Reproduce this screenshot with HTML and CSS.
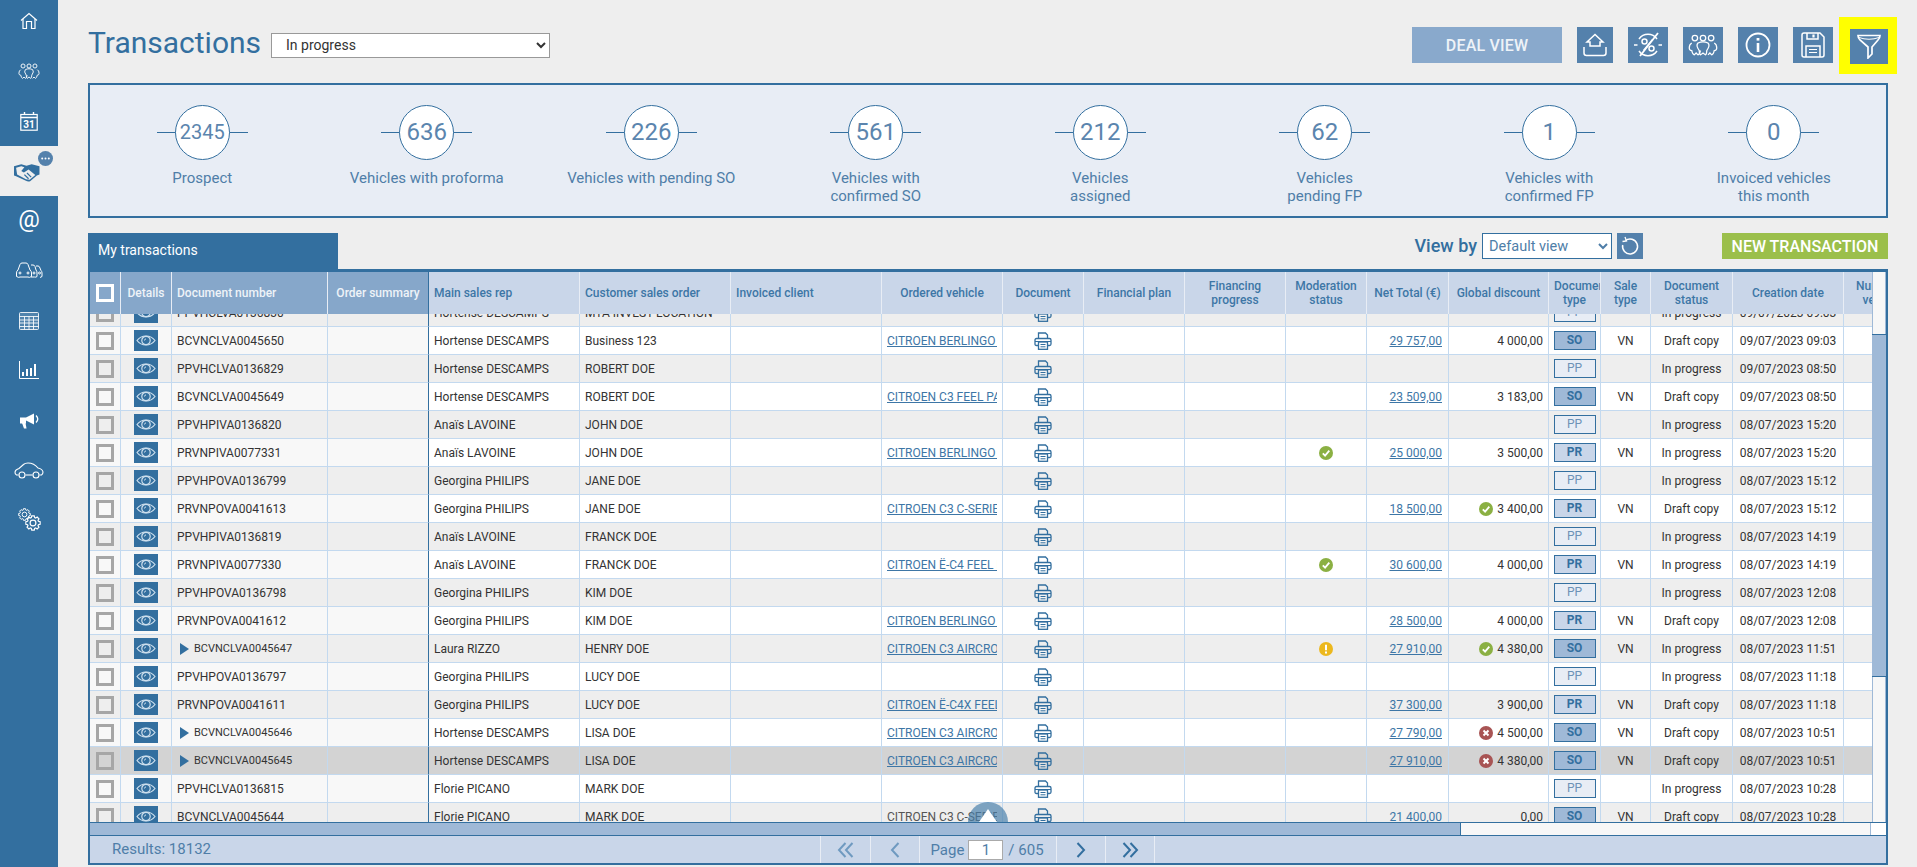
FILE: index.html
```html
<!DOCTYPE html>
<html lang="en">
<head>
<meta charset="utf-8">
<title>Transactions</title>
<link rel="stylesheet" href="styles.css">
</head>
<body>
<svg class="defs" width="0" height="0" aria-hidden="true">
  <symbol id="eye" viewBox="0 0 24 21"><path d="M3 10.5C7.5 4.5 16.500 4.500 21 10.5C16.500 16.500 7.500 16.500 3 10.5Z" fill="none" stroke="#cfe0ee" stroke-width="1.2"/><circle cx="12" cy="10.500" r="4.200" fill="none" stroke="#cfe0ee" stroke-width="1.200"/><path d="M10.500 10.500a1.600 1.600 0 0 1 1.500-1.600" fill="none" stroke="#cfe0ee"/></symbol>
  <symbol id="print" viewBox="0 0 18 18"><path d="M4.500 6V1H11.500L13.500 3V6M4.500 13.500H2.500Q1 13.500 1 12V8Q1 6.500 2.500 6.500H15.500Q17 6.500 17 8V12Q17 13.500 15.500 13.500H13.500" fill="none" stroke="#336f9f" stroke-width="1.300"/><path d="M1 9.500H17" stroke="#336f9f" stroke-width="1"/><rect x="4.500" y="10" width="9" height="7.300" fill="#fff" fill-opacity=".3" stroke="#336f9f" stroke-width="1.300"/><path d="M6.500 12.500H11.500M6.500 14.800H11.500" stroke="#336f9f"/></symbol>
  <symbol id="ok" viewBox="0 0 14 14"><circle cx="7" cy="7" r="7" fill="#8bb043"/><path d="M3.800 7.300L6.100 9.700L10.300 4.700" fill="none" stroke="#fff" stroke-width="1.800"/></symbol>
  <symbol id="ko" viewBox="0 0 14 14"><circle cx="7" cy="7" r="7" fill="#a85454"/><path d="M4.500 4.500L9.500 9.500M9.500 4.500L4.500 9.500" stroke="#fff" stroke-width="2"/></symbol>
  <symbol id="warn" viewBox="0 0 14 14"><circle cx="7" cy="7" r="7" fill="#ecb81e"/><path d="M7 2.800V8.300M7 9.600V11.400" stroke="#fff" stroke-width="2"/></symbol>
  <symbol id="team" viewBox="0 0 24 18"><g fill="none" stroke="#fff" stroke-width="1"><circle cx="5.500" cy="3" r="2.200"/><circle cx="12" cy="3" r="2.200"/><circle cx="18.500" cy="3" r="2.200"/><path d="M3 7Q1 8 1 11Q1 13 3 13Q3.500 16 5 16.500L6.500 15L8 16.500Q9.500 16 10 13"/><path d="M8 7Q10 6 12 6Q14 6 16 7Q18 9 15 13Q15 16 14 16.500L12 15L10 16.500Q9 16 9 13Q6 9 8 7Z"/><path d="M21 7Q23 8 23 11Q23 13 21 13Q20.500 16 19 16.500L17.500 15L16 16.500"/></g></symbol>
  <symbol id="gear" viewBox="-11 -11 22 22"><path d="M-2.280 -7.460L-1.740 -9.850L1.740 -9.850L2.280 -7.460L3.660 -6.890L5.730 -8.200L8.200 -5.730L6.890 -3.660L7.460 -2.280L9.850 -1.740L9.850 1.740L7.460 2.280L6.890 3.660L8.200 5.730L5.730 8.200L3.660 6.890L2.280 7.460L1.740 9.850L-1.740 9.850L-2.280 7.460L-3.660 6.890L-5.730 8.200L-8.200 5.730L-6.890 3.660L-7.460 2.280L-9.850 1.740L-9.850 -1.740L-7.460 -2.280L-6.890 -3.660L-8.200 -5.730L-5.730 -8.200L-3.660 -6.890Z" fill="none" stroke="#fff" stroke-width="1.600"/><circle r="4" fill="none" stroke="#fff" stroke-width="1.600"/></symbol>
</svg>

<nav class="sidebar">
  <a class="nav-item"><svg width="18" height="18" viewBox="0 0 18 18" fill="none" stroke="#fff" stroke-width="1.200"><path d="M1 8.500L9 1.500L17 8.500"/><path d="M3 7V16.500H6.500V9.500H11.500V16.500H15V7"/></svg></a>
  <a class="nav-item"><svg width="22" height="17"><use href="#team"/></svg></a>
  <a class="nav-item"><svg width="18" height="19" viewBox="0 0 18 19" fill="none" stroke="#fff"><rect x=".8" y="2.500" width="16.400" height="15.700" stroke-width="1.200"/><path d="M.8 5.500H17.200M4.500 0V3M13.500 0V3" stroke-width="1.400"/><text x="9" y="16" text-anchor="middle" class="cal-text">31</text></svg></a>
  <a class="nav-item nav-active"><svg width="26" height="19" viewBox="0 0 25 18"><path d="M0 3L7 1L12 2.500L17 1L24.500 3V11L22 12L15.500 17.500Q13 18 11.500 17L2 12.500L0 12Z" fill="#336f9f"/><path d="M2 4.500L7 3L10 4L7 7.500L9.500 9L14 6L20.500 11.500L15 16L11.500 15.500L3 11Z" fill="#eee"/><path d="M10 11L14 15M12.500 9.500L16.500 13.500" stroke="#336f9f" stroke-width="1.200"/></svg><span class="nav-badge"><svg width="15" height="15" viewBox="0 0 15 15" fill="#fff"><circle cx="4.200" cy="7.500" r="1"/><circle cx="7.500" cy="7.500" r="1"/><circle cx="10.800" cy="7.500" r="1"/></svg></span></a>
  <a class="nav-item nav-at">@</a>
  <a class="nav-item"><svg width="28" height="17" viewBox="0 0 28 17" fill="none" stroke="#fff"><path d="M3 8L5 2.500Q5.500 1 7 1H11Q12.500 1 13 2.500L15 8Q16.500 9 16.500 11V14.500Q14 16 13 15H5Q4 16 1.500 14.500V11Q1.500 9 3 8Z"/><path d="M16 3H18Q19.500 3 20 4.500L21 8Q22 9 22 11V14.500Q21 15.500 19.500 15H16"/><path d="M21 4H23Q24 4 24.500 5L26 8.500Q27 9.500 27 11V14.500L25 15.500"/><circle cx="5" cy="11" r="1"/><circle cx="13" cy="11" r="1"/><circle cx="19" cy="11" r="1"/><circle cx="24.500" cy="11" r="1"/></svg></a>
  <a class="nav-item"><svg width="20" height="18" viewBox="0 0 20 18" fill="none" stroke="#fff" stroke-opacity=".85"><rect x=".5" y=".5" width="19" height="17" rx="1" fill="#fff" fill-opacity=".15"/><path d="M.5 4.500H19.500M.5 8H19.500M.5 11H19.500M.5 14.500H19.500M5.500 4.500V17.500M10 4.500V17.500M14.500 4.500V17.500"/></svg></a>
  <a class="nav-item"><svg width="20" height="18" viewBox="0 0 20 18" fill="none" stroke="#fff"><path d="M.5 0V17.500H20" stroke-width="1"/><path d="M4 15V11M8 15V8M12 15V7M16 15V3" stroke-width="2"/></svg></a>
  <a class="nav-item"><svg width="21" height="17" viewBox="0 0 21 17"><path d="M1 5.500H7L15 1.500V12.500L7 8.500V11.500H1Z" fill="#fff"/><path d="M3 11L5 16.500H7.500L6.500 11Z" fill="#fff"/><path d="M17 3.500Q20.500 7 17 10.500" fill="none" stroke="#fff" stroke-width="1.300"/></svg></a>
  <a class="nav-item"><svg width="30" height="17" viewBox="0 0 30 17" fill="none" stroke="#fff" stroke-width="1.100"><path d="M4.500 13H2.500Q.8 12 1 10Q1.500 7.500 5 6.500L9.500 2.500Q11 1 14 1Q20 1 24 6Q28.500 7 29 10Q29 12 27.500 13H25.500"/><path d="M11.500 13H18.500"/><circle cx="8" cy="13" r="3"/><circle cx="22" cy="13" r="3"/></svg></a>
  <a class="nav-item"><svg width="23" height="23"><use href="#gear" width="13" height="13"/><use href="#gear" x="7" y="7" width="16" height="16"/></svg></a>
</nav>

<main class="main">
  <header class="topbar">
    <h1 class="title">Transactions</h1>
    <select class="state-select"><option>In progress</option></select>
    <div class="actions">
      <button class="deal">DEAL VIEW</button>
      <button class="tool tool-narrow"><svg width="26" height="26" viewBox="0 0 26 26" fill="none" stroke="#fff" stroke-width="1.500"><path d="M8 13V10H5L13 2.500L21 10H18V14H8V13Z"/><path d="M2 15V21Q2 23.500 4.500 23.500H21.500Q24 23.500 24 21V15"/></svg></button>
      <button class="tool"><svg width="30" height="30" viewBox="0 0 30 30" fill="none" stroke="#fff" stroke-width="1.500"><path d="M6 9A11 11 0 0 1 24 9M6 21A11 11 0 0 0 24 21"/><path d="M1 15H4.500M25.500 15H29"/><path d="M7 26L25 3" stroke-width="1.800"/><path d="M19.500 9.500L10.500 20.500" stroke-width="1.300"/><circle cx="11.500" cy="11.500" r="2.500"/><circle cx="18.500" cy="18.500" r="2.500"/></svg></button>
      <button class="tool"><svg width="30" height="23"><use href="#team"/></svg></button>
      <button class="tool"><svg width="26" height="26" viewBox="0 0 26 26" fill="none" stroke="#fff"><circle cx="13" cy="13" r="11.500" stroke-width="1.800"/><path d="M13 11V20" stroke-width="2.600"/><path d="M13 6V8.600" stroke-width="2.800"/></svg></button>
      <button class="tool"><svg width="24" height="26" viewBox="0 0 24 26" fill="none" stroke="#fff" stroke-width="1.500"><path d="M1 3Q1 1 3 1H19L23 5V23Q23 25 21 25H3Q1 25 1 23Z"/><path d="M6 1V7H17V1"/><path d="M12.500 2.500V5.500" stroke-width="2.200"/><path d="M5 25V14H19V25"/><path d="M8 17.500H16M8 20.500H16" stroke-width="1.200"/></svg></button>
      <button class="tool tool-filter"><svg width="24" height="25" viewBox="0 0 24 25" fill="none" stroke="#fff" stroke-width="1.700"><path d="M1 1.500H23Q23 4 21 6L15 13V20L11 24V13L3 6Q1 4 1 1.500Z"/><path d="M2 3.500Q12 7 22 3.500" stroke-width="1"/></svg></button>
    </div>
  </header>

  <section class="stats">
    <div class="stat"><div class="dial"><span class="num num-small">2345</span></div><p>Prospect</p></div>
    <div class="stat"><div class="dial"><span class="num">636</span></div><p>Vehicles with proforma</p></div>
    <div class="stat"><div class="dial"><span class="num">226</span></div><p>Vehicles with pending SO</p></div>
    <div class="stat"><div class="dial"><span class="num">561</span></div><p>Vehicles with<br>confirmed SO</p></div>
    <div class="stat"><div class="dial"><span class="num">212</span></div><p>Vehicles<br>assigned</p></div>
    <div class="stat"><div class="dial"><span class="num">62</span></div><p>Vehicles<br>pending FP</p></div>
    <div class="stat"><div class="dial"><span class="num">1</span></div><p>Vehicles with<br>confirmed FP</p></div>
    <div class="stat"><div class="dial"><span class="num">0</span></div><p>Invoiced vehicles<br>this month</p></div>
  </section>

  <div class="tabbar">
    <div class="tab">My transactions</div>
    <label class="viewby">View by</label>
    <select class="view-select"><option>Default view</option></select>
    <button class="reset"><svg width="20" height="20" viewBox="0 0 20 20" fill="none" stroke="#fff" stroke-width="1.500"><path d="M5.500 4.500A7.500 7.500 0 1 1 2.700 9"/><path d="M5 1L6.500 5L2.500 5.500" stroke-width="1.300"/></svg></button>
    <button class="new">NEW TRANSACTION</button>
  </div>

  <section class="panel">
    <div class="panel-top">
      <div class="grid">
        <div class="row head">
          <div><i class="cb"></i></div><div>Details</div><div>Document number</div><div>Order summary</div><div>Main sales rep</div><div>Customer sales order</div><div>Invoiced client</div><div>Ordered vehicle</div><div>Document</div><div>Financial plan</div><div>Financing progress</div><div>Moderation status</div><div>Net Total (€)</div><div>Global discount</div><div>Document type</div><div>Sale type</div><div>Document status</div><div>Creation date</div><div>Number of vehicles</div>
        </div>
        <div class="rows">
          <div class="rows-inner">
            <div class="row"><div><i class="cb"></i></div><div><span class="eye"><svg><use href="#eye"/></svg></span></div><div>PPVHCLVA0136830</div><div></div><div>Hortense DESCAMPS</div><div>MTA INVEST LOCATION</div><div></div><div></div><div><svg class="pr"><use href="#print"/></svg></div><div></div><div></div><div></div><div></div><div></div><div><b class="pp">PP</b></div><div></div><div>In progress</div><div>09/07/2023 09:03</div><div></div></div>
            <div class="row"><div><i class="cb"></i></div><div><span class="eye"><svg><use href="#eye"/></svg></span></div><div>BCVNCLVA0045650</div><div></div><div>Hortense DESCAMPS</div><div>Business 123</div><div></div><div><a>CITROEN BERLINGO FEEL</a></div><div><svg class="pr"><use href="#print"/></svg></div><div></div><div></div><div></div><div><a>29 757,00</a></div><div>4 000,00</div><div><b class="so">SO</b></div><div>VN</div><div>Draft copy</div><div>09/07/2023 09:03</div><div></div></div>
            <div class="row"><div><i class="cb"></i></div><div><span class="eye"><svg><use href="#eye"/></svg></span></div><div>PPVHCLVA0136829</div><div></div><div>Hortense DESCAMPS</div><div>ROBERT DOE</div><div></div><div></div><div><svg class="pr"><use href="#print"/></svg></div><div></div><div></div><div></div><div></div><div></div><div><b class="pp">PP</b></div><div></div><div>In progress</div><div>09/07/2023 08:50</div><div></div></div>
            <div class="row"><div><i class="cb"></i></div><div><span class="eye"><svg><use href="#eye"/></svg></span></div><div>BCVNCLVA0045649</div><div></div><div>Hortense DESCAMPS</div><div>ROBERT DOE</div><div></div><div><a>CITROEN C3 FEEL PACK</a></div><div><svg class="pr"><use href="#print"/></svg></div><div></div><div></div><div></div><div><a>23 509,00</a></div><div>3 183,00</div><div><b class="so">SO</b></div><div>VN</div><div>Draft copy</div><div>09/07/2023 08:50</div><div></div></div>
            <div class="row"><div><i class="cb"></i></div><div><span class="eye"><svg><use href="#eye"/></svg></span></div><div>PPVHPIVA0136820</div><div></div><div>Anaïs LAVOINE</div><div>JOHN DOE</div><div></div><div></div><div><svg class="pr"><use href="#print"/></svg></div><div></div><div></div><div></div><div></div><div></div><div><b class="pp">PP</b></div><div></div><div>In progress</div><div>08/07/2023 15:20</div><div></div></div>
            <div class="row"><div><i class="cb"></i></div><div><span class="eye"><svg><use href="#eye"/></svg></span></div><div>PRVNPIVA0077331</div><div></div><div>Anaïs LAVOINE</div><div>JOHN DOE</div><div></div><div><a>CITROEN BERLINGO FEEL</a></div><div><svg class="pr"><use href="#print"/></svg></div><div></div><div></div><div><svg class="st"><use href="#ok"/></svg></div><div><a>25 000,00</a></div><div>3 500,00</div><div><b class="pf">PR</b></div><div>VN</div><div>In progress</div><div>08/07/2023 15:20</div><div></div></div>
            <div class="row"><div><i class="cb"></i></div><div><span class="eye"><svg><use href="#eye"/></svg></span></div><div>PPVHPOVA0136799</div><div></div><div>Georgina PHILIPS</div><div>JANE DOE</div><div></div><div></div><div><svg class="pr"><use href="#print"/></svg></div><div></div><div></div><div></div><div></div><div></div><div><b class="pp">PP</b></div><div></div><div>In progress</div><div>08/07/2023 15:12</div><div></div></div>
            <div class="row"><div><i class="cb"></i></div><div><span class="eye"><svg><use href="#eye"/></svg></span></div><div>PRVNPOVA0041613</div><div></div><div>Georgina PHILIPS</div><div>JANE DOE</div><div></div><div><a>CITROEN C3 C-SERIES</a></div><div><svg class="pr"><use href="#print"/></svg></div><div></div><div></div><div></div><div><a>18 500,00</a></div><div><svg class="st"><use href="#ok"/></svg>3 400,00</div><div><b class="pf">PR</b></div><div>VN</div><div>Draft copy</div><div>08/07/2023 15:12</div><div></div></div>
            <div class="row"><div><i class="cb"></i></div><div><span class="eye"><svg><use href="#eye"/></svg></span></div><div>PPVHPIVA0136819</div><div></div><div>Anaïs LAVOINE</div><div>FRANCK DOE</div><div></div><div></div><div><svg class="pr"><use href="#print"/></svg></div><div></div><div></div><div></div><div></div><div></div><div><b class="pp">PP</b></div><div></div><div>In progress</div><div>08/07/2023 14:19</div><div></div></div>
            <div class="row"><div><i class="cb"></i></div><div><span class="eye"><svg><use href="#eye"/></svg></span></div><div>PRVNPIVA0077330</div><div></div><div>Anaïs LAVOINE</div><div>FRANCK DOE</div><div></div><div><a>CITROEN Ë-C4 FEEL PACK</a></div><div><svg class="pr"><use href="#print"/></svg></div><div></div><div></div><div><svg class="st"><use href="#ok"/></svg></div><div><a>30 600,00</a></div><div>4 000,00</div><div><b class="pf">PR</b></div><div>VN</div><div>In progress</div><div>08/07/2023 14:19</div><div></div></div>
            <div class="row"><div><i class="cb"></i></div><div><span class="eye"><svg><use href="#eye"/></svg></span></div><div>PPVHPOVA0136798</div><div></div><div>Georgina PHILIPS</div><div>KIM DOE</div><div></div><div></div><div><svg class="pr"><use href="#print"/></svg></div><div></div><div></div><div></div><div></div><div></div><div><b class="pp">PP</b></div><div></div><div>In progress</div><div>08/07/2023 12:08</div><div></div></div>
            <div class="row"><div><i class="cb"></i></div><div><span class="eye"><svg><use href="#eye"/></svg></span></div><div>PRVNPOVA0041612</div><div></div><div>Georgina PHILIPS</div><div>KIM DOE</div><div></div><div><a>CITROEN BERLINGO FEEL</a></div><div><svg class="pr"><use href="#print"/></svg></div><div></div><div></div><div></div><div><a>28 500,00</a></div><div>4 000,00</div><div><b class="pf">PR</b></div><div>VN</div><div>Draft copy</div><div>08/07/2023 12:08</div><div></div></div>
            <div class="row"><div><i class="cb"></i></div><div><span class="eye"><svg><use href="#eye"/></svg></span></div><div class="tree">BCVNCLVA0045647</div><div></div><div>Laura RIZZO</div><div>HENRY DOE</div><div></div><div><a>CITROEN C3 AIRCROSS</a></div><div><svg class="pr"><use href="#print"/></svg></div><div></div><div></div><div><svg class="st"><use href="#warn"/></svg></div><div><a>27 910,00</a></div><div><svg class="st"><use href="#ok"/></svg>4 380,00</div><div><b class="so">SO</b></div><div>VN</div><div>In progress</div><div>08/07/2023 11:51</div><div></div></div>
            <div class="row"><div><i class="cb"></i></div><div><span class="eye"><svg><use href="#eye"/></svg></span></div><div>PPVHPOVA0136797</div><div></div><div>Georgina PHILIPS</div><div>LUCY DOE</div><div></div><div></div><div><svg class="pr"><use href="#print"/></svg></div><div></div><div></div><div></div><div></div><div></div><div><b class="pp">PP</b></div><div></div><div>In progress</div><div>08/07/2023 11:18</div><div></div></div>
            <div class="row"><div><i class="cb"></i></div><div><span class="eye"><svg><use href="#eye"/></svg></span></div><div>PRVNPOVA0041611</div><div></div><div>Georgina PHILIPS</div><div>LUCY DOE</div><div></div><div><a>CITROEN Ë-C4X FEEL</a></div><div><svg class="pr"><use href="#print"/></svg></div><div></div><div></div><div></div><div><a>37 300,00</a></div><div>3 900,00</div><div><b class="pf">PR</b></div><div>VN</div><div>Draft copy</div><div>08/07/2023 11:18</div><div></div></div>
            <div class="row"><div><i class="cb"></i></div><div><span class="eye"><svg><use href="#eye"/></svg></span></div><div class="tree">BCVNCLVA0045646</div><div></div><div>Hortense DESCAMPS</div><div>LISA DOE</div><div></div><div><a>CITROEN C3 AIRCROSS</a></div><div><svg class="pr"><use href="#print"/></svg></div><div></div><div></div><div></div><div><a>27 790,00</a></div><div><svg class="st"><use href="#ko"/></svg>4 500,00</div><div><b class="so">SO</b></div><div>VN</div><div>Draft copy</div><div>08/07/2023 10:51</div><div></div></div>
            <div class="row row-selected"><div><i class="cb"></i></div><div><span class="eye"><svg><use href="#eye"/></svg></span></div><div class="tree">BCVNCLVA0045645</div><div></div><div>Hortense DESCAMPS</div><div>LISA DOE</div><div></div><div><a>CITROEN C3 AIRCROSS</a></div><div><svg class="pr"><use href="#print"/></svg></div><div></div><div></div><div></div><div><a>27 910,00</a></div><div><svg class="st"><use href="#ko"/></svg>4 380,00</div><div><b class="so">SO</b></div><div>VN</div><div>Draft copy</div><div>08/07/2023 10:51</div><div></div></div>
            <div class="row"><div><i class="cb"></i></div><div><span class="eye"><svg><use href="#eye"/></svg></span></div><div>PPVHCLVA0136815</div><div></div><div>Florie PICANO</div><div>MARK DOE</div><div></div><div></div><div><svg class="pr"><use href="#print"/></svg></div><div></div><div></div><div></div><div></div><div></div><div><b class="pp">PP</b></div><div></div><div>In progress</div><div>08/07/2023 10:28</div><div></div></div>
            <div class="row"><div><i class="cb"></i></div><div><span class="eye"><svg><use href="#eye"/></svg></span></div><div>BCVNCLVA0045644</div><div></div><div>Florie PICANO</div><div>MARK DOE</div><div></div><div><a class="plain">CITROEN C3 C-SERIES</a></div><div><svg class="pr"><use href="#print"/></svg></div><div></div><div></div><div></div><div><a>21 400,00</a></div><div>0,00</div><div><b class="so">SO</b></div><div>VN</div><div>Draft copy</div><div>08/07/2023 10:28</div><div></div></div>
          </div>
          <div class="to-top"><i></i></div>
        </div>
      </div>
      <div class="vbar"><div class="vthumb"></div></div>
    </div>
    <div class="hbar"><div class="htrack"><div class="hthumb"></div></div></div>
    <footer class="foot">
      <div class="results">Results: 18132</div>
      <div class="pg"><svg class="off" width="18" height="16" viewBox="0 0 18 16"><path d="M8.500 1L2 8L8.500 15M15.500 1L9 8L15.500 15"/></svg></div>
      <div class="pg pg-thin"><svg class="off" width="10" height="16" viewBox="0 0 10 16"><path d="M8.500 1L2 8L8.500 15"/></svg></div>
      <div class="pg pg-page">Page <input class="page-input" value="1"> <span class="of">/ 605</span></div>
      <div class="pg pg-thin"><svg width="10" height="16" viewBox="0 0 10 16"><path d="M1.500 1L8 8L1.500 15"/></svg></div>
      <div class="pg pg-last"><svg width="18" height="16" viewBox="0 0 18 16"><path d="M2.500 1L9 8L2.500 15M9.500 1L16 8L9.500 15"/></svg></div>
    </footer>
  </section>
</main>
</body>
</html>
```

FILE: styles.css
```css
* { box-sizing: border-box; }
html { height: 867px; overflow: hidden; }
body {
  margin: 0;
  display: flex;
  height: 867px;
  overflow: hidden;
  background: #eee;
  font-family: Roboto, "Liberation Sans", sans-serif;
  color: #333;
}
.defs { position: absolute; }
button { font-family: inherit; border: 0; padding: 0; }

/* sidebar */
.sidebar {
  flex: 0 0 58px;
  background: #336f9f;
  display: flex;
  flex-direction: column;
}
.nav-item {
  height: 49.800px;
  flex: none;
  display: flex;
  align-items: center;
  justify-content: center;
  position: relative;
  color: #fff;
}
.nav-item:first-child { margin-top: -4px; }
.nav-item:nth-child(2) { margin-top: 1px; }
.nav-active { background: #eee; }
.nav-active > svg { margin-top: 2px; margin-left: -4px; }
.nav-badge {
  position: absolute;
  left: 38px;
  top: 5px;
  width: 15px;
  height: 15px;
  border-radius: 50%;
  background: #5481ac;
  display: flex;
}
.nav-at { font-size: 24px; font-weight: 400; padding-bottom: 4px; }
.cal-text { font: 700 10px Roboto, sans-serif; fill: #fff; stroke: none; }

/* top */
.main {
  flex: 1;
  min-width: 0;
  padding: 0 29px 0 30px;
}
.topbar {
  height: 83px;
  padding-top: 7px;
  display: flex;
  align-items: center;
}
.title {
  margin: -4px 10px 0 0;
  font-size: 30px;
  line-height: 40px;
  font-weight: 400;
  color: #336f9f;
}
.state-select {
  width: 279px;
  height: 25px;
  padding-left: 10px;
  border: 1px solid #999;
  background: #fff;
  font: 14px Roboto, sans-serif;
  color: #333;
}
.actions {
  margin-left: auto;
  display: flex;
  align-items: center;
  gap: 15px;
}
.deal {
  width: 150px;
  height: 36px;
  background: #89a9cc;
  color: #eef3f8;
  font-size: 16px;
  font-weight: 500;
  letter-spacing: .2px;
}
.tool {
  width: 40px;
  height: 36px;
  background: #5481ac;
  display: flex;
  align-items: center;
  justify-content: center;
}
.tool-narrow { width: 36px; }
.tool-filter {
  box-sizing: content-box;
  width: 38px;
  height: 35px;
  border: solid #ff0;
  border-width: 12px 9px 10px 11px;
  margin: 1px -9px 0 -9px;
}

/* stats */
.stats {
  height: 135px;
  border: 2px solid #336f9f;
  background: #e8edf5;
  padding-top: 20px;
  display: grid;
  grid-template-columns: repeat(8, 1fr);
}
.stat { text-align: center; }
.stat p {
  margin: 9px 0 0;
  font-size: 15px;
  line-height: 18px;
  color: #4f7ea8;
}
.dial {
  position: relative;
  width: 91px;
  height: 55px;
  margin: 0 auto;
  display: flex;
  justify-content: center;
}
.dial::before {
  content: "";
  position: absolute;
  left: 0;
  right: 0;
  top: 27px;
  border-top: 1px solid #336f9f;
}
.num {
  position: relative;
  width: 55px;
  height: 55px;
  border-radius: 50%;
  border: 1px solid #336f9f;
  background: #fff;
  color: #5b85ae;
  font-size: 24px;
  line-height: 53px;
}
.num-small { font-size: 20px; }

/* toolbar above the table */
.tabbar {
  margin-top: 15px;
  height: 36px;
  display: flex;
  align-items: flex-start;
}
.tab {
  width: 250px;
  height: 36px;
  background: #336f9f;
  color: #fff;
  font-size: 14px;
  line-height: 34px;
  padding-left: 10px;
}
.viewby {
  margin-left: auto;
  font-size: 18px;
  font-weight: 500;
  line-height: 26px;
  color: #336f9f;
}
.view-select {
  width: 130px;
  height: 26px;
  margin-left: 5px;
  padding-left: 2px;
  border: 1px solid #336f9f;
  background: #fff;
  color: #4f7ea8;
  font: 14.500px Roboto, sans-serif;
}
.reset {
  width: 26px;
  height: 26px;
  margin-left: 5px;
  background: #5481ac;
  display: flex;
  align-items: center;
  justify-content: center;
}
.new {
  width: 166px;
  height: 26px;
  margin-left: 79px;
  background: #9bbf4b;
  color: #fff;
  font-size: 16px;
  font-weight: 500;
}

/* table panel */
.panel {
  height: 596px;
  border: solid #336f9f;
  border-width: 3px 2px 2px;
  display: flex;
  flex-direction: column;
}
.panel-top { flex: 1; min-height: 0; display: flex; }
.grid {
  flex: 1;
  min-width: 0;
  display: flex;
  flex-direction: column;
  overflow: hidden;
}
.row {
  flex: none;
  width: 1836px;
  height: 28px;
  display: grid;
  grid-template-columns: 31px 51px 156px 101px 151px 151px 151px 121px 81px 101px 101px 81px 82px 100px 52px 50px 82px 111px 82px;
  font-size: 12px;
  background: #fff;
}
.row > div {
  display: flex;
  align-items: center;
  min-width: 0;
  overflow: hidden;
  white-space: nowrap;
  border-right: 1px solid #c3d9ef;
  border-bottom: 1px solid #c3d9ef;
  padding: 0 5px;
}
.rows .row > div:nth-child(-n+4) { background: #f8f8f8; }
.row > div:nth-child(1),
.row > div:nth-child(2),
.row > div:nth-child(9),
.row > div:nth-child(12),
.row > div:nth-child(15),
.row > div:nth-child(16),
.row > div:nth-child(17),
.row > div:nth-child(18) { justify-content: center; padding: 0; }
.row > div:nth-child(13),
.row > div:nth-child(14) { justify-content: flex-end; }
.row > div:nth-child(13) { padding-right: 6px; }
.row > div:nth-child(4) { border-right-color: #336f9f; }

.rows { flex: 1; min-height: 0; position: relative; overflow: hidden; }
.rows-inner { margin-top: -15px; }
.rows .row:nth-child(odd) { background: #eee; }
.rows .row:nth-child(odd) > div:nth-child(-n+4) { background: #eee; }
.rows .row.row-selected,
.rows .row.row-selected > div:nth-child(-n+4) { background: #d3d3d3; }

/* header */
.head {
  height: 42px;
  background: #c9d6e9;
  color: #3d76a6;
  font-weight: 500;
  line-height: 14px;
}
.row.head > div {
  display: grid;
  grid-template-columns: minmax(0, 1fr);
  align-items: center;
  justify-content: stretch;
  padding: 0 5px;
  border-bottom: 0;
  border-right-color: #e8edf5;
  white-space: normal;
  text-align: center;
}
.row.head > div:nth-child(3),
.row.head > div:nth-child(5),
.row.head > div:nth-child(6),
.row.head > div:nth-child(7) { text-align: left; }
.row.head > div:nth-child(-n+4) { background: #86a7ca; color: #eef3f8; }
.row.head > div:nth-child(1) { padding: 0; justify-items: center; }
.row.head > div:nth-child(2) { padding: 0; }
.row.head > div:nth-child(4) { padding: 0; white-space: nowrap; border-right-color: #336f9f; }
.head .cb { border-color: #fff; }

/* cell content */
.cb {
  display: block;
  width: 18px;
  height: 18px;
  border: 3px solid #a6a6a6;
}
.eye {
  width: 24px;
  height: 21px;
  background: #336f9f;
  display: block;
}
.eye svg { display: block; width: 24px; height: 21px; }
.pr { width: 18px; height: 18px; }
.st { width: 14px; height: 14px; flex: none; }
.row > div:nth-child(14) .st { margin-right: 4px; }
.row a {
  color: #3d76a6;
  text-decoration: underline;
  display: block;
  overflow: hidden;
  white-space: nowrap;
}
.row a.plain { text-decoration: none; color: #555; }
.row b {
  display: block;
  width: 42px;
  height: 19px;
  border: 1px solid #336f9f;
  text-align: center;
  line-height: 17px;
  color: #336f9f;
  font-weight: 700;
}
.so { background: #9fb9d7; }
.pf { background: #c9d6e9; }
.row b.pp { background: #e8edf5; color: #6d92b7; font-weight: 400; }
.tree { font-size: 11px; }
.tree::before {
  content: "";
  flex: none;
  border-left: 9px solid #336f9f;
  border-top: 6px solid transparent;
  border-bottom: 6px solid transparent;
  margin: 0 5px 0 3px;
}
.to-top {
  position: absolute;
  left: 878px;
  bottom: -20px;
  width: 40px;
  height: 40px;
  border-radius: 50%;
  background: rgba(70, 125, 170, .68);
}
.to-top i {
  position: absolute;
  left: 11px;
  top: 7px;
  border-left: 9px solid transparent;
  border-right: 9px solid transparent;
  border-bottom: 13px solid #fff;
}

/* scrollbars */
.vbar {
  flex: 0 0 14px;
  padding-top: 62px;
  background: #f7f7f7;
  border: 1px solid #9fb9d7;
  border-width: 0 1px;
}
.vthumb { height: 343px; margin: 0 -1px; background: #9fb9d7; border-top: 1px solid #336f9f; border-bottom: 1px solid #336f9f; }
.hbar {
  flex: 0 0 14px;
  border-top: 1px solid #336f9f;
  border-bottom: 1px solid #336f9f;
  background: #fff;
}
.htrack { width: 1781px; height: 100%; background: #f7f7f7; border-right: 1px solid #9fb9d7; }
.hthumb { width: 1371px; height: 100%; background: #9fb9d7; border-right: 1px solid #336f9f; }

/* footer */
.foot {
  flex: 0 0 27px;
  display: flex;
  background: #c9d6e9;
  color: #4f7ea8;
  font-size: 15px;
}
.results { width: 730px; padding-left: 22px; line-height: 27px; }
.pg {
  width: 50px;
  border-left: 1px solid #e8edf5;
  display: flex;
  align-items: center;
  justify-content: center;
}
.pg-thin { width: 49px; }
.pg-last { border-right: 1px solid #e8edf5; }
.pg-page { width: 137px; gap: 4px; padding-right: 2px; }
.of { margin-left: 1px; }
.pg svg { fill: none; stroke: #336f9f; stroke-width: 2; }
.pg svg.off { stroke: #6f9ac0; }
.page-input {
  width: 35px;
  height: 20px;
  border: 1px solid #aaa;
  background: #fff;
  padding: 0;
  text-align: center;
  font: 15px Roboto, sans-serif;
  color: #4f7ea8;
}
```
